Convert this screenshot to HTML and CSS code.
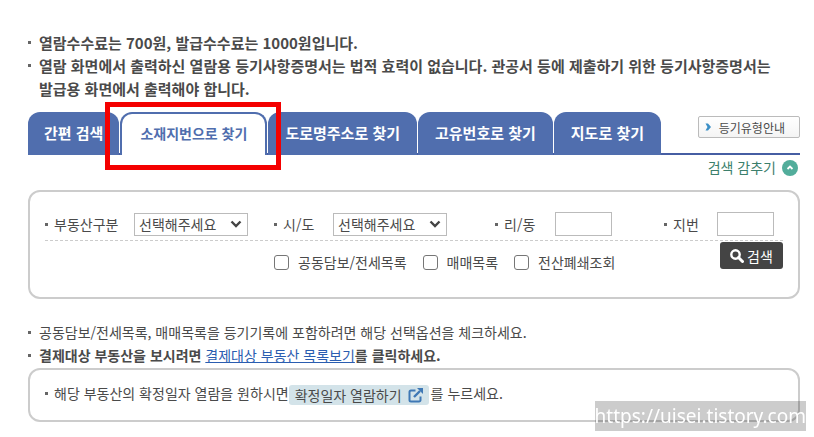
FILE: index.html
```
<!DOCTYPE html>
<html lang="ko">
<head>
    <meta charset="UTF-8">
    <meta name="viewport" content="width=device-width, initial-scale=1.0">
    <title>부동산 등기 열람</title>
    <link rel="stylesheet" href="styles.css">
</head>
<body>
    <div class="container">
        <ul class="notes fee-notes">
            <li>열람수수료는 700원, 발급수수료는 1000원입니다.</li>
            <li>열람 화면에서 출력하신 열람용 등기사항증명서는 법적 효력이 없습니다. 관공서 등에 제출하기 위한 등기사항증명서는<br>발급용 화면에서 출력해야 합니다.</li>
        </ul>

        <div class="tab-bar">
            <div class="tabs">
                <button type="button" class="tab">간편 검색</button>
                <button type="button" class="tab active">소재지번으로 찾기<span class="highlight"></span></button>
                <button type="button" class="tab">도로명주소로 찾기</button>
                <button type="button" class="tab">고유번호로 찾기</button>
                <button type="button" class="tab">지도로 찾기</button>
            </div>
            <button type="button" class="guide-button">
                <svg width="6" height="8" viewBox="0 0 6 8"><path d="M0.500 0.500h2.500L6 4 3 7.500H0.500l2-3.500z" fill="#3b8fc6"/></svg>
                등기유형안내
            </button>
        </div>

        <div class="toggle-row">
            <a href="#search-form">검색 감추기
                <svg width="16" height="16" viewBox="0 0 16 16"><circle cx="8" cy="8" r="8" fill="#52ad9b"/><path d="M5.500 9L8 6.500 10.500 9" fill="none" stroke="#fff" stroke-width="1.800"/></svg>
            </a>
        </div>

        <form id="search-form" class="panel search-form">
            <div class="fields">
                <label for="kind">부동산구분</label>
                <div class="select-box">
                    <select id="kind"><option>선택해주세요</option></select>
                    <svg width="12" height="8" viewBox="0 0 12 8"><path d="M1.500 1.500L6 6l4.500-4.500" fill="none" stroke="#444" stroke-width="2.400"/></svg>
                </div>
                <label for="sido">시/도</label>
                <div class="select-box">
                    <select id="sido"><option>선택해주세요</option></select>
                    <svg width="12" height="8" viewBox="0 0 12 8"><path d="M1.500 1.500L6 6l4.500-4.500" fill="none" stroke="#444" stroke-width="2.400"/></svg>
                </div>
                <label for="ridong">리/동</label>
                <input type="text" id="ridong">
                <label for="jibun">지번</label>
                <input type="text" id="jibun">
            </div>
            <div class="options">
                <label><input type="checkbox"> 공동담보/전세목록</label>
                <label><input type="checkbox"> 매매목록</label>
                <label><input type="checkbox"> 전산폐쇄조회</label>
                <button type="submit" class="search-button">
                    <svg width="14" height="14" viewBox="0 0 14 14"><circle cx="5.500" cy="5.500" r="4.200" fill="none" stroke="#fff" stroke-width="2.400"/><path d="M8.500 8.500l4 4" stroke="#fff" stroke-width="3" stroke-linecap="round"/></svg>
                    검색
                </button>
            </div>
        </form>

        <ul class="notes">
            <li>공동담보/전세목록, 매매목록을 등기기록에 포함하려면 해당 선택옵션을 체크하세요.</li>
            <li class="strong">결제대상 부동산을 보시려면 <a href="#">결제대상 부동산 목록보기</a>를 클릭하세요.</li>
        </ul>

        <div class="panel date-panel">
            <span class="item">해당 부동산의 확정일자 열람을 원하시면</span>
            <button type="button" class="date-button">
                확정일자 열람하기
                <svg width="15" height="15" viewBox="0 0 15 15"><path d="M7.500 2.500H3a1.500 1.500 0 0 0-1.500 1.500v8A1.500 1.500 0 0 0 3 13.500h8a1.500 1.500 0 0 0 1.500-1.500V8.500" fill="none" stroke="#3f78b5" stroke-width="2"/><path d="M6 9l6-6" stroke="#3f78b5" stroke-width="2.400"/><path d="M9 0h6v6z" fill="#3f78b5"/></svg>
            </button>
            <span>를 누르세요.</span>
        </div>
    </div>
    <div class="watermark">https://uisei.tistory.com</div>
</body>
</html>
```
FILE: styles.css
```
* {
    box-sizing: border-box;
}
body {
    margin: 0;
    background-color: #fff;
    color: #4a4a4a;
    font-family: "Noto Sans CJK KR", sans-serif;
    font-size: 14px;
    line-height: 23px;
}
button,
input,
select {
    font-family: inherit;
    font-size: 14px;
    color: inherit;
}
button {
    border: none;
    padding: 0;
    cursor: pointer;
    white-space: nowrap;
}
svg {
    flex: none;
}
.container {
    padding: 31px 14px 0 28px;
}
.notes {
    list-style: none;
    margin: 0;
    padding: 0;
    white-space: nowrap;
}
.notes li {
    padding-left: 11px;
    background: linear-gradient(#666, #666) 0 10px / 3px 3px no-repeat;
}
.notes a {
    color: #2a5db0;
    font-weight: normal;
}
.strong {
    font-weight: bold;
}
.fee-notes {
    font-size: 15px;
    font-weight: bold;
}
.tab-bar {
    display: flex;
    justify-content: space-between;
    align-items: flex-start;
    margin-top: 12px;
    border-bottom: 2px solid #465ea3;
}
.tabs {
    display: flex;
    gap: 1px;
    margin-bottom: -2px;
}
.tab {
    height: 43px;
    padding: 0 17px 2px;
    border-radius: 12px 12px 0 0;
    background-color: #506eae;
    color: #fff;
    font-size: 15px;
    font-weight: bold;
}
.tab:first-child {
    padding: 0 16px 2px;
}
.tab.active {
    position: relative;
    padding: 0 18px 4px;
    border: 2px solid #506eae;
    border-bottom: none;
    background-color: #fff;
    color: #506eae;
    font-size: 14px;
}
.highlight {
    position: absolute;
    inset: -12px -16px -15px -17px;
    border: 5px solid #f40000;
    z-index: 1;
}
.guide-button {
    display: flex;
    align-items: center;
    gap: 8px;
    height: 22px;
    margin-top: 4px;
    padding: 0 14px 0 6px;
    border: 1px solid #bbb;
    border-radius: 2px;
    background: linear-gradient(#fff, #f4f4f4);
    font-size: 12px;
}
.toggle-row {
    display: flex;
    justify-content: flex-end;
    padding: 1px 2px 0 0;
}
.toggle-row a {
    display: flex;
    align-items: center;
    gap: 6px;
    color: #3c7f6c;
    text-decoration: none;
}
.panel {
    border: 2px solid #ccc;
    border-radius: 12px;
}
.search-form {
    margin: 11px 0 22px;
    padding: 20px 15px 23px;
}
.fields {
    display: grid;
    grid-template-columns: 89fr 140fr 59fr 162fr 60fr 109fr 53fr 66fr;
    align-items: center;
    padding-bottom: 4px;
    border-bottom: 1px dashed #ccc;
}
.fields label,
.item {
    padding-left: 9px;
    background: linear-gradient(#666, #666) 0 10px / 3px 3px no-repeat;
    white-space: nowrap;
}
.select-box {
    display: flex;
    align-items: center;
    width: 114px;
    height: 23px;
}
.select-box select {
    width: 100%;
    height: 100%;
    padding: 0 4px 2px;
    border: 1px solid #bbb;
    border-radius: 0;
    background-color: #fff;
    appearance: none;
}
.select-box svg {
    margin-left: -18px;
    pointer-events: none;
}
.fields input {
    width: 57px;
    height: 24px;
    border: 1px solid #bbb;
}
.options {
    display: flex;
    align-items: center;
    gap: 16px;
    padding: 1px 0 0 229px;
}
.options label {
    display: flex;
    align-items: center;
    gap: 9px;
    padding-top: 9px;
    white-space: nowrap;
}
.options input {
    appearance: none;
    width: 15px;
    height: 15px;
    margin: 0;
    border: 1px solid #767676;
    border-radius: 3px;
}
.search-button {
    display: flex;
    align-items: center;
    justify-content: center;
    gap: 3px;
    width: 63px;
    height: 27px;
    margin: 0 0 auto auto;
    border-radius: 3px;
    background-color: #444;
    color: #fff;
}
.date-panel {
    display: flex;
    align-items: center;
    margin-top: 1px;
    padding: 12px 15px 15px;
    white-space: nowrap;
}
.date-button {
    display: flex;
    align-items: center;
    gap: 6px;
    height: 20px;
    margin: 3px 2px 0 0;
    padding: 0 6px;
    border-radius: 3px;
    background-color: #d3e3e9;
}
.watermark {
    position: fixed;
    right: 8px;
    bottom: 6px;
    background-color: rgba(0, 0, 0, 0.2);
    color: #fff;
    font-family: "Noto Sans", sans-serif;
    font-size: 19px;
    line-height: 30px;
}
```
